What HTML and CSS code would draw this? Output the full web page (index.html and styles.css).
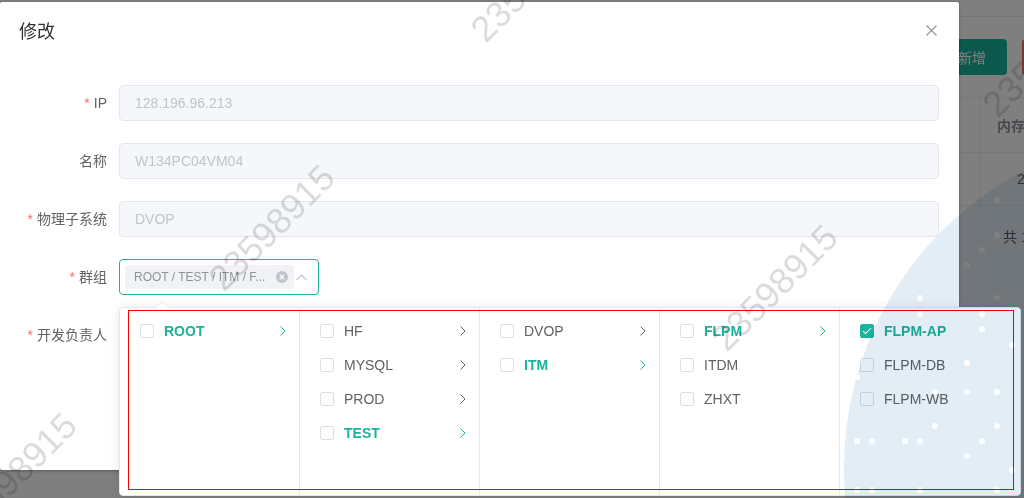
FILE: index.html
```html
<!DOCTYPE html>
<html lang="zh-CN">
<head>
<meta charset="utf-8">
<title>修改</title>
<link rel="stylesheet" href="styles.css">
</head>
<body>
<div class="page">
  <div class="page-head"></div>
  <div class="toolbar">
    <button class="btn btn-primary">新增</button>
    <button class="btn btn-danger">删除</button>
  </div>
  <div class="table">
    <div class="tr th"><div class="td c1">名称</div><div class="td c2">内存(G)</div></div>
    <div class="tr"><div class="td c1">W134PC04VM04</div><div class="td c2">2</div></div>
  </div>
  <div class="pager">共 1 条</div>
</div>

<div class="mask"></div>

<div class="dialog">
  <div class="dialog-header">
    <span class="dialog-title">修改</span>
    <span class="dialog-close"><svg width="11" height="11" viewBox="0 0 11 11"><path d="M0.5 0.5 L10.5 10.5 M10.5 0.5 L0.5 10.5" stroke="#909399" stroke-width="1.1" fill="none"/></svg></span>
  </div>
  <div class="dialog-body">
    <form class="form">
      <div class="form-item">
        <label class="form-label"><span class="req">*</span>IP</label>
        <div class="form-content"><input class="input" disabled value="128.196.96.213"></div>
      </div>
      <div class="form-item">
        <label class="form-label">名称</label>
        <div class="form-content"><input class="input" disabled value="W134PC04VM04"></div>
      </div>
      <div class="form-item">
        <label class="form-label"><span class="req">*</span>物理子系统</label>
        <div class="form-content"><input class="input" disabled value="DVOP"></div>
      </div>
      <div class="form-item">
        <label class="form-label"><span class="req">*</span>群组</label>
        <div class="form-content">
          <div class="select">
            <span class="tag">
              <span class="tag-text">ROOT / TEST / ITM / F...</span>
              <svg class="tag-close" width="12" height="12" viewBox="0 0 12 12"><circle cx="6" cy="6" r="6" fill="#c0c4cc"/><path d="M3.8 3.8 L8.2 8.2 M8.2 3.8 L3.8 8.2" stroke="#fff" stroke-width="1.3"/></svg>
            </span>
            <svg class="select-arrow" width="11" height="7" viewBox="0 0 11 7"><path d="M0.5 6 L5.5 1 L10.5 6" stroke="#c0c4cc" stroke-width="1.1" fill="none"/></svg>
          </div>
        </div>
      </div>
      <div class="form-item">
        <label class="form-label"><span class="req">*</span>开发负责人</label>
        <div class="form-content"><input class="input input-plain" value=""></div>
      </div>
    </form>
  </div>
</div>

<div class="cascader">
  <div class="menu">
    <div class="node active"><span class="cb"></span><span class="node-label">ROOT</span><svg class="arrow" width="6" height="10" viewBox="0 0 6 10"><path d="M0.5 0.5 L5 5 L0.5 9.5" fill="none" stroke="currentColor" stroke-width="1"/></svg></div>
  </div>
  <div class="menu">
    <div class="node"><span class="cb"></span><span class="node-label">HF</span><svg class="arrow" width="6" height="10" viewBox="0 0 6 10"><path d="M0.5 0.5 L5 5 L0.5 9.5" fill="none" stroke="currentColor" stroke-width="1"/></svg></div>
    <div class="node"><span class="cb"></span><span class="node-label">MYSQL</span><svg class="arrow" width="6" height="10" viewBox="0 0 6 10"><path d="M0.5 0.5 L5 5 L0.5 9.5" fill="none" stroke="currentColor" stroke-width="1"/></svg></div>
    <div class="node"><span class="cb"></span><span class="node-label">PROD</span><svg class="arrow" width="6" height="10" viewBox="0 0 6 10"><path d="M0.5 0.5 L5 5 L0.5 9.5" fill="none" stroke="currentColor" stroke-width="1"/></svg></div>
    <div class="node active"><span class="cb"></span><span class="node-label">TEST</span><svg class="arrow" width="6" height="10" viewBox="0 0 6 10"><path d="M0.5 0.5 L5 5 L0.5 9.5" fill="none" stroke="currentColor" stroke-width="1"/></svg></div>
  </div>
  <div class="menu">
    <div class="node"><span class="cb"></span><span class="node-label">DVOP</span><svg class="arrow" width="6" height="10" viewBox="0 0 6 10"><path d="M0.5 0.5 L5 5 L0.5 9.5" fill="none" stroke="currentColor" stroke-width="1"/></svg></div>
    <div class="node active"><span class="cb"></span><span class="node-label">ITM</span><svg class="arrow" width="6" height="10" viewBox="0 0 6 10"><path d="M0.5 0.5 L5 5 L0.5 9.5" fill="none" stroke="currentColor" stroke-width="1"/></svg></div>
  </div>
  <div class="menu">
    <div class="node active"><span class="cb"></span><span class="node-label">FLPM</span><svg class="arrow" width="6" height="10" viewBox="0 0 6 10"><path d="M0.5 0.5 L5 5 L0.5 9.5" fill="none" stroke="currentColor" stroke-width="1"/></svg></div>
    <div class="node"><span class="cb"></span><span class="node-label">ITDM</span></div>
    <div class="node"><span class="cb"></span><span class="node-label">ZHXT</span></div>
  </div>
  <div class="menu">
    <div class="node active"><span class="cb checked"></span><span class="node-label">FLPM-AP</span></div>
    <div class="node"><span class="cb"></span><span class="node-label">FLPM-DB</span></div>
    <div class="node"><span class="cb"></span><span class="node-label">FLPM-WB</span></div>
  </div>
</div>

<div class="annot"></div>

<svg class="deco" width="1024" height="498" viewBox="0 0 1024 498">
  <circle cx="1180" cy="468" r="336" fill="#e3edf6"/>
  <g fill="#ffffff">
    <circle cx="997" cy="200" r="3"/>
    <circle cx="997" cy="235" r="3"/>
    <circle cx="982" cy="250" r="3"/>
    <circle cx="967" cy="265" r="3"/>
    <circle cx="997" cy="298" r="3"/>
    <circle cx="920" cy="298" r="3"/>
    <circle cx="982" cy="314" r="3"/>
    <circle cx="920" cy="314" r="3"/>
    <circle cx="982" cy="329" r="3"/>
    <circle cx="967" cy="363" r="3"/>
    <circle cx="857" cy="377" r="3"/>
    <circle cx="935" cy="392" r="3"/>
    <circle cx="967" cy="392" r="3"/>
    <circle cx="997" cy="392" r="3"/>
    <circle cx="935" cy="426" r="3"/>
    <circle cx="997" cy="426" r="3"/>
    <circle cx="857" cy="441" r="3"/>
    <circle cx="872" cy="441" r="3"/>
    <circle cx="905" cy="441" r="3"/>
    <circle cx="920" cy="441" r="3"/>
    <circle cx="982" cy="441" r="3"/>
    <circle cx="842" cy="456" r="3"/>
    <circle cx="967" cy="456" r="3"/>
    <circle cx="857" cy="490" r="3"/>
    <circle cx="872" cy="490" r="3"/>
    <circle cx="920" cy="490" r="3"/>
    <circle cx="997" cy="490" r="3"/>
    <circle cx="1012" cy="345" r="3"/>
    <circle cx="1012" cy="470" r="3"/>
  </g>
</svg>

<div class="watermarks">
  <span class="wm wm1">23598915</span>
  <span class="wm wm2">23598915</span>
  <span class="wm wm3">23598915</span>
  <span class="wm wm4">23598915</span>
  <span class="wm wm5">23598915</span>
</div>
</body>
</html>
```

FILE: styles.css
```css
* { box-sizing: border-box; }

html, body {
  margin: 0;
  padding: 0;
  width: 1024px;
  height: 498px;
  overflow: hidden;
}

body {
  position: relative;
  font-family: "Liberation Sans", "Noto Sans CJK SC", sans-serif;
  font-size: 14px;
  color: #606266;
  background: #fff;
}

/* ---------- page behind the modal ---------- */
.page {
  width: 1024px;
  height: 498px;
  background: #fff;
  overflow: hidden;
}
.page-head {
  height: 17px;
  border-bottom: 1px solid #e6e6e6;
}
.toolbar {
  display: flex;
  gap: 15px;
  margin-top: 22px;
  padding-left: 935px;
}
.btn {
  flex-shrink: 0;
  height: 36px;
  border: none;
  border-radius: 4px;
  color: #fff;
  font-family: inherit;
  font-size: 14px;
}
.btn-primary {
  width: 72px;
  background: #19b39b;
  text-align: left;
  padding: 0 10px 0 23px;
}
.btn-danger {
  width: 72px;
  background: #f56c6c;
}
.table {
  margin-top: 22px;
  margin-left: 20px;
  width: 1200px;
  border-top: 1px solid #ebeef5;
}
.tr {
  display: flex;
  border-bottom: 1px solid #ebeef5;
  height: 53px;
  align-items: center;
}
.tr.th {
  height: 55px;
  font-weight: bold;
  color: #909399;
}
.td { height: 100%; display: flex; align-items: center; }
.c1 {
  width: 960px;
  border-right: 1px solid #ebeef5;
  padding-left: 10px;
}
.c2 {
  width: 82px;
  justify-content: center;
}
.pager {
  margin-top: 15px;
  line-height: 32px;
  padding-left: 1003px;
  white-space: nowrap;
}

/* ---------- modal ---------- */
.mask {
  position: absolute;
  inset: 0;
  background: rgba(0, 0, 0, 0.5);
  z-index: 1;
}

.dialog {
  position: absolute;
  left: 0;
  top: 2px;
  width: 959px;
  height: 468px;
  background: #fff;
  border-radius: 2px;
  box-shadow: 0 1px 3px rgba(0, 0, 0, 0.3);
  z-index: 2;
}
.dialog-header {
  display: flex;
  justify-content: space-between;
  align-items: flex-start;
  padding: 18px 22px 10px 19px;
}
.dialog-title {
  font-size: 18px;
  line-height: 24px;
  color: #303133;
}
.dialog-close {
  display: flex;
  margin-top: 5px;
}
.dialog-body {
  padding: 31px 20px 0 20px;
}

.form-item {
  display: flex;
  margin-bottom: 22px;
}
.form-label {
  width: 99px;
  flex-shrink: 0;
  text-align: right;
  padding-right: 12px;
  line-height: 36px;
  color: #606266;
  white-space: nowrap;
}
.req {
  color: #f56c6c;
  margin-right: 4px;
}
.form-content {
  flex: 1;
}
.input {
  display: block;
  width: 100%;
  height: 36px;
  padding: 0 15px;
  border: 1px solid #e4e7ed;
  border-radius: 4px;
  background: #f5f7fa;
  color: #c0c4cc;
  font-family: inherit;
  font-size: 14px;
}
.input-plain {
  background: #fff;
  border-color: #dcdfe6;
}

.select {
  width: 200px;
  height: 36px;
  display: flex;
  align-items: center;
  border: 1px solid #1ab39b;
  border-radius: 4px;
  padding: 0 6px 0 5px;
}
.tag {
  display: flex;
  align-items: center;
  height: 24px;
  background: #f0f2f5;
  border-radius: 4px;
  padding: 0 6px 0 9px;
  font-size: 12px;
  color: #909399;
  white-space: nowrap;
}
.tag-close {
  margin-left: 11px;
  flex-shrink: 0;
}
.select-arrow {
  margin-left: 2px;
  flex-shrink: 0;
}

/* ---------- cascader panel (popper) ---------- */
.cascader {
  position: absolute;
  left: 119px;
  top: 307px;
  display: flex;
  background: #fff;
  border: 1px solid #e4e7ed;
  border-radius: 4px;
  box-shadow: 0 2px 12px rgba(0, 0, 0, 0.1);
  z-index: 3;
}
.cascader::before,
.cascader::after {
  content: "";
  position: absolute;
  left: 36px;
  border: 6px solid transparent;
  border-top-width: 0;
}
.cascader::before {
  top: -7px;
  border-bottom-color: #e4e7ed;
}
.cascader::after {
  top: -6px;
  border-bottom-color: #fff;
}
.menu {
  width: 180px;
  height: 187px;
  padding: 6px 0;
  border-right: 1px solid #e4e7ed;
}
.menu:last-child {
  border-right: none;
}
.node {
  display: flex;
  align-items: center;
  height: 34px;
  padding: 0 13px 0 20px;
  color: #606266;
  font-size: 14px;
}
.node.active {
  color: #1ab39b;
  font-weight: bold;
}
.cb {
  width: 14px;
  height: 14px;
  flex-shrink: 0;
  border: 1px solid #dcdfe6;
  border-radius: 2px;
  background: #fff;
  position: relative;
}
.cb.checked {
  background: #1ab39b;
  border-color: #1ab39b;
}
.cb.checked::after {
  content: "";
  position: absolute;
  left: 4px;
  top: 1px;
  width: 3px;
  height: 7px;
  border: 1px solid #fff;
  border-top: none;
  border-left: none;
  transform: rotate(45deg);
}
.node-label {
  margin-left: 10px;
}
.arrow {
  margin-left: auto;
  flex-shrink: 0;
}

/* red annotation frame */
.annot {
  position: absolute;
  left: 128px;
  top: 310px;
  width: 886px;
  height: 180px;
  border: 1px solid #ff0000;
  z-index: 4;
}

/* background decoration */
.deco {
  position: absolute;
  left: 0;
  top: 0;
  z-index: 5;
  mix-blend-mode: multiply;
  pointer-events: none;
}

/* watermark */
.watermarks {
  position: absolute;
  inset: 0;
  z-index: 6;
  pointer-events: none;
  overflow: hidden;
}
.wm {
  position: absolute;
  font-family: "Liberation Sans", sans-serif;
  font-size: 36px;
  color: rgba(0, 0, 0, 0.14);
  white-space: nowrap;
  transform: translate(-50%, -50%) rotate(-45deg);
}
.wm1 { left: 272px; top: 228px; }
.wm2 { left: 775px; top: 288px; }
.wm3 { left: 534px; top: -21px; }
.wm4 { left: 14px; top: 476px; }
.wm5 { left: 1046px; top: 54px; }
```
